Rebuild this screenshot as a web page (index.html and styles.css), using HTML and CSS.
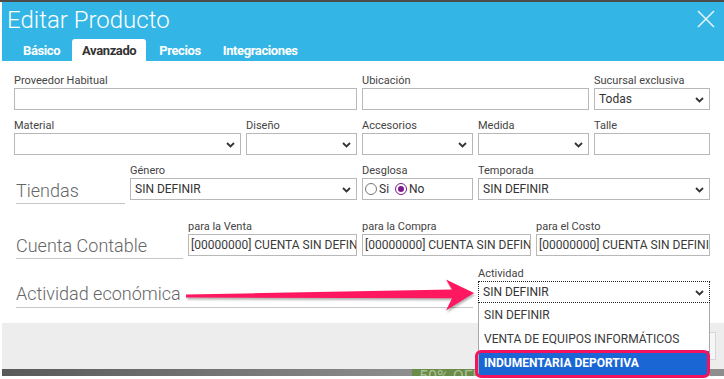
FILE: index.html
```html
<!DOCTYPE html>
<html lang="es">
<head>
<meta charset="utf-8">
<link rel="stylesheet" href="styles.css">
</head>
<body>
<div class="topline"></div>
<div class="dialog">
  <header class="hdr">
    <div class="title-row">
      <h1 class="title">Editar Producto</h1>
      <svg class="close" viewBox="0 0 18 18"><path d="M1 1 L17 17 M17 1 L1 17" stroke="#e4f5fc" stroke-width="1.6" fill="none"/></svg>
    </div>
    <nav class="tabs">
      <span class="tab">Básico</span>
      <span class="tab active">Avanzado</span>
      <span class="tab">Precios</span>
      <span class="tab">Integraciones</span>
    </nav>
  </header>

  <main class="body">
    <div class="row r1">
      <div class="field s6"><span class="lbl">Proveedor Habitual</span><div class="ctl inp"></div></div>
      <div class="field s4"><span class="lbl">Ubicación</span><div class="ctl inp"></div></div>
      <div class="field s2"><span class="lbl">Sucursal exclusiva</span><div class="ctl sel">Todas<svg class="chev" viewBox="0 0 9 6"><path d="M1 1 L4.5 4.5 L8 1" stroke="#333" stroke-width="1.8" fill="none"/></svg></div></div>
    </div>

    <div class="row r2">
      <div class="field s4"><span class="lbl">Material</span><div class="ctl sel"><svg class="chev" viewBox="0 0 9 6"><path d="M1 1 L4.5 4.5 L8 1" stroke="#333" stroke-width="1.8" fill="none"/></svg></div></div>
      <div class="field s2"><span class="lbl">Diseño</span><div class="ctl sel"><svg class="chev" viewBox="0 0 9 6"><path d="M1 1 L4.5 4.5 L8 1" stroke="#333" stroke-width="1.8" fill="none"/></svg></div></div>
      <div class="field s2"><span class="lbl">Accesorios</span><div class="ctl sel"><svg class="chev" viewBox="0 0 9 6"><path d="M1 1 L4.5 4.5 L8 1" stroke="#333" stroke-width="1.8" fill="none"/></svg></div></div>
      <div class="field s2"><span class="lbl">Medida</span><div class="ctl sel"><svg class="chev" viewBox="0 0 9 6"><path d="M1 1 L4.5 4.5 L8 1" stroke="#333" stroke-width="1.8" fill="none"/></svg></div></div>
      <div class="field s2"><span class="lbl">Talle</span><div class="ctl inp"></div></div>
    </div>

    <div class="row r3">
      <div class="big s2 b-tiendas">Tiendas</div>
      <div class="field s4"><span class="lbl">Género</span><div class="ctl sel">SIN DEFINIR<svg class="chev" viewBox="0 0 9 6"><path d="M1 1 L4.5 4.5 L8 1" stroke="#333" stroke-width="1.8" fill="none"/></svg></div></div>
      <div class="field s2"><span class="lbl">Desglosa</span>
        <div class="ctl radios">
          <span class="radio"></span><span class="rtxt">Si</span>
          <span class="radio on"></span><span class="rtxt">No</span>
        </div>
      </div>
      <div class="field s4"><span class="lbl">Temporada</span><div class="ctl sel">SIN DEFINIR<svg class="chev" viewBox="0 0 9 6"><path d="M1 1 L4.5 4.5 L8 1" stroke="#333" stroke-width="1.8" fill="none"/></svg></div></div>
    </div>

    <div class="row r4">
      <div class="big s3 b-cuenta">Cuenta Contable</div>
      <div class="field s3"><span class="lbl">para la Venta</span><div class="ctl inp txt">[00000000] CUENTA SIN DEFINIR</div></div>
      <div class="field s3"><span class="lbl">para la Compra</span><div class="ctl inp txt">[00000000] CUENTA SIN DEFINIR</div></div>
      <div class="field s3"><span class="lbl">para el Costo</span><div class="ctl inp txt">[00000000] CUENTA SIN DEFINIR</div></div>
    </div>

    <div class="row r5">
      <div class="big s8 b-act">Actividad económica</div>
      <div class="field s4 act"><span class="lbl">Actividad</span>
        <div class="ctl sel focus">SIN DEFINIR<svg class="chev" viewBox="0 0 9 6"><path d="M1 1 L4.5 4.5 L8 1" stroke="#333" stroke-width="1.8" fill="none"/></svg></div>
        <div class="dd">
          <div class="opt">SIN DEFINIR</div>
          <div class="opt">VENTA DE EQUIPOS INFORMÁTICOS</div>
          <div class="opt hl">INDUMENTARIA DEPORTIVA</div>
        </div>
        <div class="mark"></div>
      </div>
    </div>
  </main>

  <footer class="ftr"><span class="btn"></span></footer>
  <div class="bar"><span class="promo">50% OFF</span></div>

  <svg class="arrow" viewBox="0 0 724 379"><path d="M186 294.6 L452 289.4 L446 279.5 L474 293 L446 310.5 L452 298.2 L186 297.6 Z" fill="#ff1760"/></svg>
</div>
</body>
</html>
```

FILE: styles.css
```css
html, body {
  margin: 0;
  padding: 0;
}
body {
  width: 724px;
  height: 379px;
  overflow: hidden;
  background: #fff;
  font-family: Roboto, "Liberation Sans", sans-serif;
}
.topline {
  height: 2px;
  background: #4b4b4b;
}
.dialog {
  margin-left: 2px;
  position: relative;
}
.hdr {
  background: #33b5e5;
  height: 59px;
  display: flex;
  flex-direction: column;
}
.title-row {
  display: flex;
  justify-content: space-between;
  align-items: flex-start;
  height: 37px;
}
.title {
  margin: 0;
  padding: 3px 0 0 5px;
  font-size: 24px;
  font-weight: 300;
  line-height: 30px;
  color: #fff;
}
.close {
  width: 18px;
  height: 18px;
  margin: 8px 9px 0 0;
}
.tabs {
  display: flex;
  gap: 2px;
  padding-left: 11px;
  height: 22px;
}
.tab {
  padding: 0 10px;
  font-size: 13px;
  font-weight: 700;
  line-height: 23px;
  letter-spacing: -0.4px;
  color: #fff;
  border-radius: 3px 3px 0 0;
}
.tab.active {
  background: #fff;
  color: #333;
}
.tab.active + .tab {
  margin-left: 1px;
}

.body {
  padding: 13px 12px 15px 12px;
  height: 262px;
  box-sizing: border-box;
}
.row {
  display: grid;
  grid-template-columns: repeat(11, 53px) 58px;
  column-gap: 5px;
  align-items: start;
}
.r2, .r3 { margin-top: 9px; }
.r4 { margin-top: 16px; }
.r5 { margin-top: 8px; }

.s2 { grid-column: span 2; }
.s3 { grid-column: span 3; }
.s4 { grid-column: span 4; }
.s6 { grid-column: span 6; }
.s8 { grid-column: span 8; }

.field { position: relative; }
.lbl {
  display: block;
  font-size: 11px;
  line-height: 14px;
  color: #444;
  white-space: nowrap;
}
.ctl {
  height: 22px;
  box-sizing: border-box;
  border: 1px solid #b8b8b8;
  font-size: 12px;
  line-height: 20px;
  color: #333;
  padding: 0 4px;
  position: relative;
  overflow: hidden;
  white-space: nowrap;
  background: #fff;
}
.ctl.txt {
  padding: 0 2px;
  color: #3a3a3a;
}
.chev {
  position: absolute;
  right: 5px;
  top: 8px;
  width: 9px;
  height: 6px;
}
.ctl.focus {
  border: 1px dotted #222;
}

.radios {
  display: flex;
  align-items: center;
  padding: 0 2px;
}
.radio {
  width: 12px;
  height: 12px;
  box-sizing: border-box;
  border: 1px solid #777;
  border-radius: 50%;
  background: #fff;
  position: relative;
}
.radio.on {
  border: 1.5px solid #7d1a8e;
  margin-left: 6px;
}
.radio.on::after {
  content: "";
  position: absolute;
  left: 1.5px;
  top: 1.5px;
  width: 6px;
  height: 6px;
  border-radius: 50%;
  background: #7d1a8e;
}
.rtxt {
  margin-left: 2px;
  font-size: 12px;
  color: #333;
}

.big {
  margin-left: 2px;
  font-size: 18px;
  font-weight: 300;
  line-height: 22px;
  color: #666;
  border-bottom: 1px solid #c6c6c6;
  white-space: nowrap;
}
.b-tiendas { margin-top: 16px; padding-bottom: 1px; }
.b-cuenta { margin-top: 15px; padding-bottom: 1px; }
.b-act { margin-top: 16px; padding-bottom: 2px; }

.dd {
  position: absolute;
  left: 0;
  right: 0;
  top: 36px;
  background: #fff;
  border: 1px solid #a8a8a8;
  border-top: none;
  z-index: 5;
}
.opt {
  height: 24px;
  line-height: 24px;
  padding-left: 5px;
  font-size: 12px;
  color: #3a3a3a;
  white-space: nowrap;
}
.opt.hl {
  background: #1a66d4;
  color: #fff;
  font-weight: 700;
}
.mark {
  position: absolute;
  left: -3px;
  top: 83px;
  width: 235px;
  height: 28px;
  box-sizing: border-box;
  border: 3px solid #f4145e;
  border-radius: 6px;
  z-index: 6;
}

.ftr {
  height: 46px;
  background: #ededed;
  display: flex;
  justify-content: flex-end;
  align-items: center;
  padding-right: 8px;
}
.btn {
  width: 70px;
  height: 28px;
  box-sizing: border-box;
  background: #f6f6f6;
  border: 1px solid #d6d6d6;
}
.bar {
  height: 7px;
  background: linear-gradient(90deg, #595959, #8d8d8d 410px, #8d8d8d);
  display: flex;
}
.promo {
  margin-left: 410px;
  width: 66px;
  height: 7px;
  overflow: hidden;
  background: #6b8c48;
  color: #a9bf95;
  font-size: 16px;
  line-height: 16px;
  padding-left: 7px;
  box-sizing: border-box;
  white-space: nowrap;
}
.arrow {
  position: absolute;
  left: -2px;
  top: -2px;
  width: 724px;
  height: 379px;
  z-index: 7;
  pointer-events: none;
  filter: drop-shadow(1px 2px 1px rgba(0,0,0,0.3));
}
```
